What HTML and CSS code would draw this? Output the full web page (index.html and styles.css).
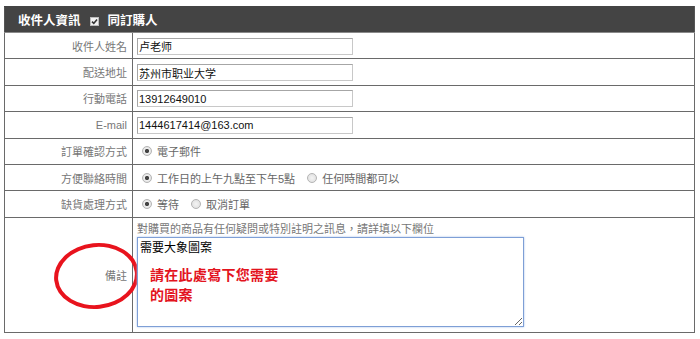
FILE: index.html
```html
<!DOCTYPE html>
<html lang="zh-Hant">
<head>
    <meta charset="UTF-8">
    <title>收件人資訊</title>
    <link rel="stylesheet" href="styles.css">
</head>
<body>

<table class="order-form">
    <tr class="order-head">
        <th colspan="2">
            收件人資訊
            <svg class="same-box" width="9" height="9" viewBox="0 0 9 9">
                <rect x="0.5" y="0.5" width="8" height="8" fill="#f2f2f2" stroke="#bbb"/>
                <path d="M2 4.6 L3.8 6.4 L7 2.4" fill="none" stroke="#333" stroke-width="1.6"/>
            </svg>
            同訂購人
        </th>
    </tr>
    <tr>
        <th class="label">收件人姓名</th>
        <td><input class="field" type="text" value="卢老师"></td>
    </tr>
    <tr>
        <th class="label">配送地址</th>
        <td><input class="field" type="text" value="苏州市职业大学"></td>
    </tr>
    <tr>
        <th class="label">行動電話</th>
        <td><input class="field" type="text" value="13912649010"></td>
    </tr>
    <tr>
        <th class="label">E-mail</th>
        <td><input class="field" type="text" value="1444617414@163.com"></td>
    </tr>
    <tr>
        <th class="label">訂單確認方式</th>
        <td>
            <label class="opt"><input type="radio" name="confirm" checked>電子郵件</label>
        </td>
    </tr>
    <tr>
        <th class="label">方便聯絡時間</th>
        <td>
            <label class="opt"><input type="radio" name="time" checked>工作日的上午九點至下午5點</label>
            <label class="opt"><input type="radio" name="time">任何時間都可以</label>
        </td>
    </tr>
    <tr>
        <th class="label">缺貨處理方式</th>
        <td>
            <label class="opt"><input type="radio" name="stock" checked>等待</label>
            <label class="opt"><input type="radio" name="stock">取消訂單</label>
        </td>
    </tr>
    <tr class="note-row">
        <th class="label">
            <div class="mark-wrap">
                <span class="mark-circle"></span>
                備註
            </div>
        </th>
        <td>
            <div class="hint">對購買的商品有任何疑問或特別註明之訊息，請詳填以下欄位</div>
            <div class="note-wrap">
                <textarea class="note">需要大象圖案</textarea>
                <div class="note-mark">請在此處寫下您需要<br>的圖案</div>
            </div>
        </td>
    </tr>
</table>

</body>
</html>
```

FILE: styles.css
```css
/* 收件人表單 */
body { margin: 0; padding: 6px 5px 0 4px; font-family: "Liberation Sans", "Noto Sans CJK TC", sans-serif; font-size: 11px; color: #333; background: #fff; }
.order-form { width: 691px; border-collapse: collapse; border: 1px solid #555; }
.order-form td, .order-form th { border: 1px solid #6a6a6a; padding: 0; height: 25.4px; }

.order-head th { background: #444; color: #fff; height: 25px; text-align: left; padding-left: 13px; font-size: 12.5px; font-weight: bold; border-color: #444 #555 #8a8a8a #555; }
.same-box { vertical-align: -1px; margin: 0 5px 0 6px; }

.order-form th.label { width: 122px; text-align: right; padding-right: 5px; color: #777; font-weight: normal; }
.order-form td { padding-left: 4px; }

.field { width: 216px; height: 17px; box-sizing: border-box; margin: 1px 0 0 0; padding: 0 1px; border: 1px solid #a6a6a6; border-right-color: #c8c8c8; border-bottom-color: #c8c8c8; font: 11px "Liberation Sans", "Noto Sans CJK SC", sans-serif; color: #111; vertical-align: middle; }

.opt { display: inline-flex; align-items: center; margin-left: 5px; margin-right: 4px; color: #666; }
.opt input { appearance: none; -webkit-appearance: none; width: 10px; height: 10px; margin: 0 5px 0 0; border-radius: 50%; border: 1px solid #b5b5b5; background: radial-gradient(circle, #f4f4f4 0, #dcdcdc 100%); box-sizing: border-box; }
.opt input:checked { background: radial-gradient(circle, #444 0, #444 1.8px, #f0f0f0 2.4px, #d6d6d6 100%); }

.note-row td { padding: 4px 4px 5px 4px; vertical-align: top; }
.hint { color: #777; line-height: 14px; height: 15px; }
.note-wrap { position: relative; width: 387px; }
.note { display: block; width: 387px; height: 90px; box-sizing: border-box; margin: 0; padding: 2px 2px; border: 1px solid #7e9fd6; box-shadow: 0 0 2px #a9c2ea; font: 12px/16px "Liberation Sans", "Noto Sans CJK TC", sans-serif; color: #000; resize: both; outline: none; }
.note-mark { position: absolute; left: 13px; top: 27px; color: #e3141e; font-size: 14px; font-weight: 600; line-height: 20px; letter-spacing: 0.3px; font-family: "Noto Sans CJK TC", sans-serif; }

.mark-wrap { position: relative; }
.mark-circle { position: absolute; left: 49px; top: -24px; width: 85px; height: 66px; box-sizing: border-box; border: 4px solid #e8131d; border-radius: 50%; transform: rotate(-6deg); }
```
